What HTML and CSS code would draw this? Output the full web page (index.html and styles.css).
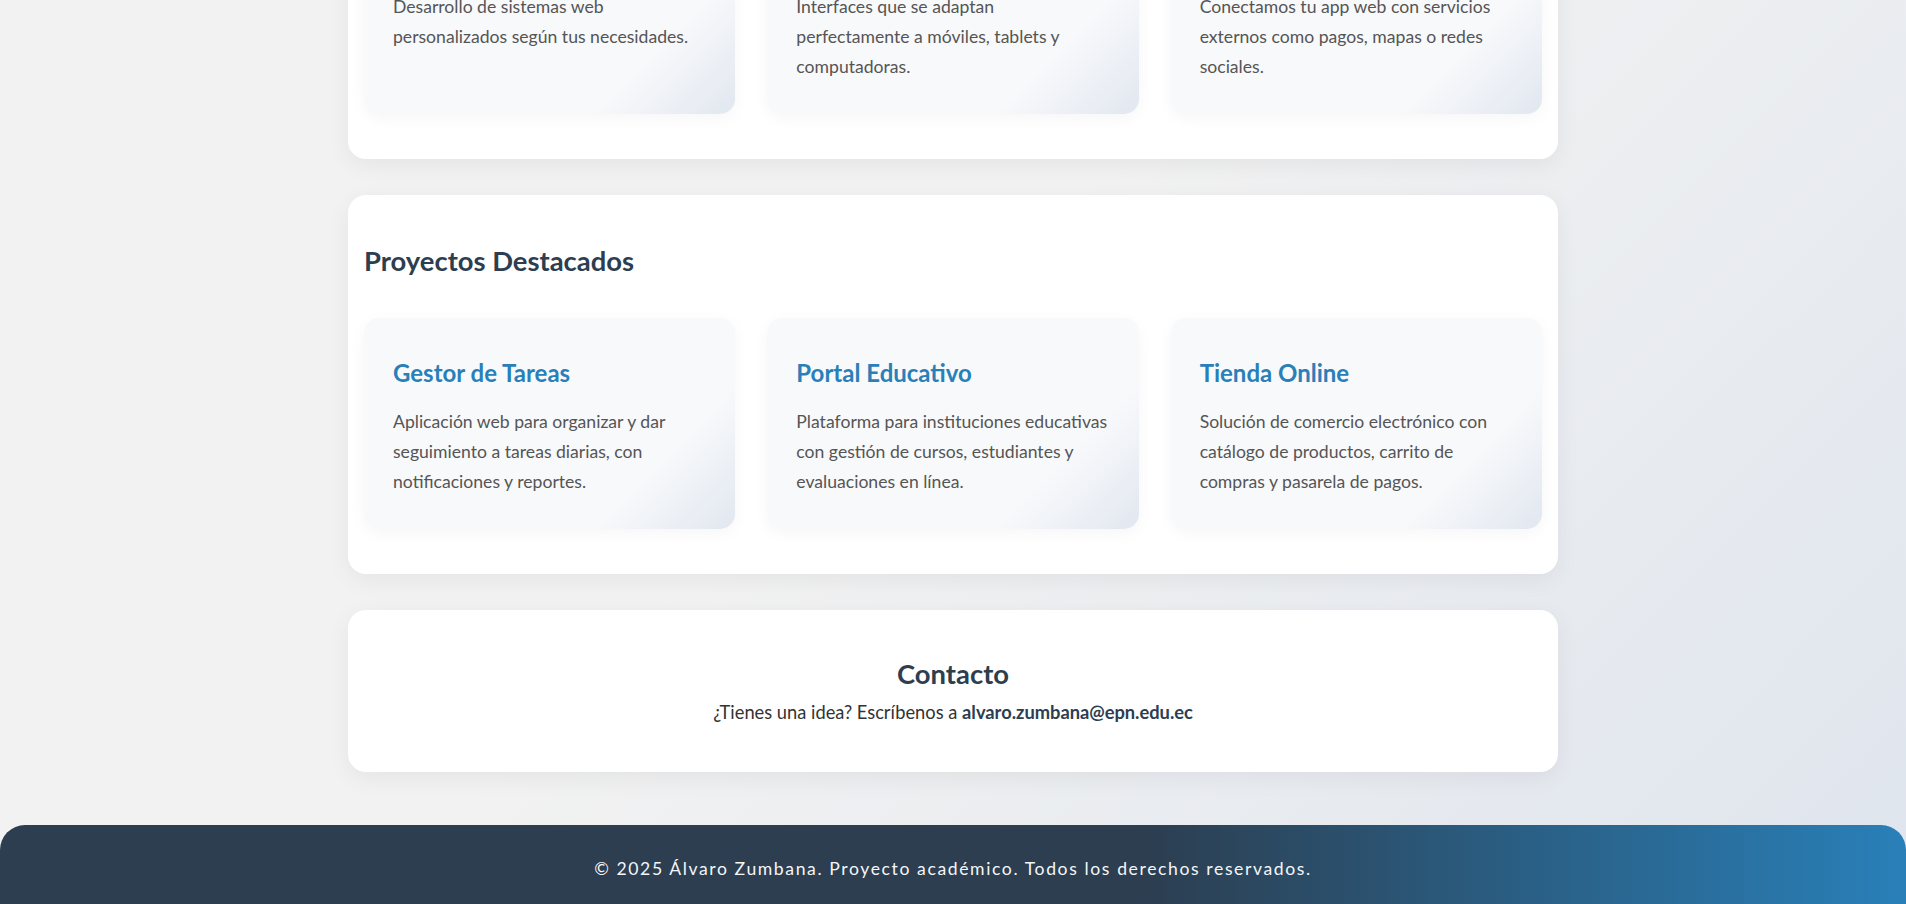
FILE: index.html
```html
<!DOCTYPE html>
<html lang="es">
<head>
<meta charset="utf-8">
<title>Álvaro Zumbana - Desarrollo Web</title>
<link rel="stylesheet" href="styles.css">
</head>
<body>
<main class="main">
  <section class="section services">
    <h2 class="section-title">Nuestros Servicios</h2>
    <div class="grid">
      <article class="card">
        <h3 class="card-title">Desarrollo Web a Medida</h3>
        <p class="card-text">Desarrollo de sistemas web personalizados según tus necesidades.</p>
      </article>
      <article class="card">
        <h3 class="card-title">Diseño Responsive</h3>
        <p class="card-text">Interfaces que se adaptan perfectamente a móviles, tablets y computadoras.</p>
      </article>
      <article class="card">
        <h3 class="card-title">Integración de APIs</h3>
        <p class="card-text">Conectamos tu app web con servicios externos como pagos, mapas o redes sociales.</p>
      </article>
    </div>
  </section>

  <section class="section projects">
    <h2 class="section-title">Proyectos Destacados</h2>
    <div class="grid">
      <article class="card">
        <h3 class="card-title">Gestor de Tareas</h3>
        <p class="card-text">Aplicación web para organizar y dar seguimiento a tareas diarias, con notificaciones y reportes.</p>
      </article>
      <article class="card">
        <h3 class="card-title">Portal Educativo</h3>
        <p class="card-text">Plataforma para instituciones educativas con gestión de cursos, estudiantes y evaluaciones en línea.</p>
      </article>
      <article class="card">
        <h3 class="card-title">Tienda Online</h3>
        <p class="card-text">Solución de comercio electrónico con catálogo de productos, carrito de compras y pasarela de pagos.</p>
      </article>
    </div>
  </section>

  <section class="section contact">
    <h2 class="contact-title">Contacto</h2>
    <p class="contact-text">¿Tienes una idea? Escríbenos a <strong>alvaro.zumbana@epn.edu.ec</strong></p>
  </section>
</main>
<footer class="footer">
  <p class="footer-text">© 2025 Álvaro Zumbana. Proyecto académico. Todos los derechos reservados.</p>
</footer>
</body>
</html>
```
FILE: styles.css
```css
* { box-sizing: border-box; }

html {
  min-height: 100%;
  background: linear-gradient(135deg, #f2f2f2 0%, #f2f2f2 45%, #dfe5ee 100%);
}

body {
  margin: 0;
  height: 904px;
  overflow: hidden;
  font-family: Lato, "Noto Sans", sans-serif;
  color: #333;
}

.main {
  width: 1210px;
  margin: -220px auto 0;
  display: flex;
  flex-direction: column;
  gap: 36px;
}

.section {
  background: #fff;
  border-radius: 18px;
  box-shadow: 0 6px 24px rgba(0, 0, 0, 0.06);
  padding: 32px 16px 45px;
}

.section-title {
  margin: 18px 0 41px;
  font-size: 27.4px;
  line-height: 32px;
  font-weight: 700;
  color: #2c3e50;
}

.grid {
  display: grid;
  grid-template-columns: repeat(3, 1fr);
  gap: 32px;
}

.card {
  height: 211px;
  padding: 41px 29px 32px;
  border-radius: 15px;
  background: linear-gradient(135deg, #f8f9fb 0%, #f8f9fb 75%, #e1e7f0 100%);
  box-shadow: 0 4px 16px rgba(0, 0, 0, 0.04);
}

.card-title {
  margin: 0 0 20px;
  font-size: 24px;
  line-height: 28px;
  font-weight: 700;
  color: #2980b9;
}

.card-text {
  margin: 0;
  font-size: 17.6px;
  line-height: 30px;
  color: #555;
}

.contact {
  padding: 48px 16px 46px;
  text-align: center;
}

.contact-title {
  margin: 0 0 9px;
  font-size: 27.4px;
  line-height: 32px;
  font-weight: 700;
  color: #2c3e50;
}

.contact-text {
  margin: 0;
  font-size: 18.3px;
  line-height: 27px;
  color: #333;
}

.contact-text strong {
  color: #2c3e50;
}

.footer {
  margin-top: 53px;
  padding: 30px 0 30px;
  border-radius: 25px 25px 0 0;
  background: linear-gradient(90deg, #2c3e50 0%, #2c3e50 60%, #2980b9 100%);
  text-align: center;
}

.footer-text {
  margin: 0;
  font-size: 17.6px;
  line-height: 27px;
  letter-spacing: 1.6px;
  color: #f4f6f8;
}
```
